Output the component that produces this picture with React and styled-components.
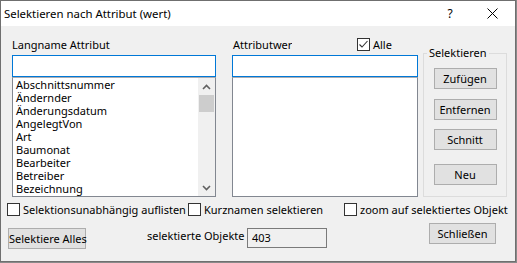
import React from "react";
import styled, { createGlobalStyle } from "styled-components";

const GlobalStyle = createGlobalStyle`
  html, body { margin: 0; padding: 0; background: #8a8a8a; }
  body { font-family: "Noto Sans", "Open Sans", sans-serif; font-size: 11px; color: #000; }
  * { box-sizing: border-box; }
`;

const Window = styled.div`
  width: 516px;
  height: 262px;
  border: 1px solid #6f6f6f;
  background: #f0f0f0;
  display: flex;
  flex-direction: column;
`;

const TitleBar = styled.div`
  height: 25px;
  background: #fff;
  display: flex;
  align-items: center;
  padding-left: 3px;
`;

const Title = styled.span`
  font-size: 11.4px;
  flex: 1;
`;

const TitleButton = styled.div`
  width: ${(p) => p.$w}px;
  height: 25px;
  display: flex;
  align-items: center;
  justify-content: center;
  font-size: 12px;
`;

const Body = styled.div`
  flex: 1;
  padding: 7px 0 0 6px;
  display: flex;
  flex-direction: column;
`;

const MainRow = styled.div`
  display: flex;
  align-items: flex-start;
  margin-left: 5px;
`;

const Column = styled.div`
  width: ${(p) => p.$w}px;
  margin-left: ${(p) => p.$ml || 0}px;
  display: flex;
  flex-direction: column;
`;

const HeaderRow = styled.div`
  height: 22px;
  display: flex;
  align-items: center;
`;

const Label = styled.span`
  white-space: nowrap;
  padding-left: ${(p) => p.$pl || 0}px;
`;

const ClippedLabel = styled.span`
  white-space: nowrap;
  overflow: hidden;
  width: 60px;
  padding-left: 1px;
`;

const SearchInput = styled.div`
  height: 22px;
  border: 1px solid #0078d7;
  background: #fff;
`;

const ListBox = styled.div`
  height: 120px;
  border: 1px solid #828790;
  border-top-color: #abadb3;
  background: #fff;
  display: flex;
`;

const Items = styled.div`
  flex: 1;
  padding: 0 0 0 3px;
  overflow: hidden;
`;

const Item = styled.div`
  height: 13px;
  line-height: 13px;
  white-space: nowrap;
`;

const ScrollBar = styled.div`
  width: 17px;
  background: #f0f0f0;
  display: flex;
  flex-direction: column;
`;

const ScrollArrow = styled.div`
  height: 17px;
  display: flex;
  align-items: center;
  justify-content: center;
`;

const Thumb = styled.div`
  height: 17px;
  margin: 0 1px;
  background: #cdcdcd;
`;

const Track = styled.div`
  flex: 1;
`;

const GroupBox = styled.fieldset`
  margin: 12px 0 0 5px;
  padding: 0;
  width: 84px;
  height: 152px;
  border: 1px solid #dcdcdc;
  display: flex;
  flex-direction: column;
  align-items: center;
`;

const Legend = styled.legend`
  margin-left: 3px;
  padding: 0 2px;
  font-size: 11px;
  line-height: 16px;
`;

const Button = styled.button`
  width: ${(p) => p.$w || 63}px;
  height: ${(p) => p.$h || 21}px;
  margin-top: ${(p) => p.$mt || 0}px;
  margin-left: ${(p) => p.$ml || 0}px;
  padding: 0;
  background: #e1e1e1;
  border: 1px solid #adadad;
  font-family: inherit;
  font-size: 11px;
  color: #000;
  white-space: nowrap;
  flex-shrink: 0;
`;

const CheckRow = styled.div`
  display: grid;
  grid-template-columns: 181px 156px auto;
  margin-top: 6px;
  height: 13px;
`;

const CheckItem = styled.label`
  display: flex;
  align-items: center;
  gap: 3px;
  height: 13px;
  white-space: nowrap;
  margin-left: ${(p) => p.$ml || 0}px;
`;

const Box = styled.span`
  width: 13px;
  height: 13px;
  border: 1px solid #333;
  background: #fff;
  display: flex;
  align-items: center;
  justify-content: center;
  flex-shrink: 0;
`;

const BottomRow = styled.div`
  display: flex;
  align-items: flex-start;
  margin-top: 7px;
  padding-left: 1px;
`;

const StatLabel = styled.span`
  margin-top: 5px;
  margin-left: 61px;
  width: 100px;
  line-height: 16px;
  white-space: nowrap;
`;

const ValueField = styled.div`
  width: 80px;
  height: 20px;
  margin-top: 5px;
  border: 1px solid #7a7a7a;
  background: #f0f0f0;
  padding-left: 4px;
  line-height: 18px;
`;

const Check = ({ checked }) => (
  <Box>
    {checked && (
      <svg width="11" height="11" viewBox="0 0 11 11">
        <polyline points="1.5,5.5 4,8 9.5,2" fill="none" stroke="#333" strokeWidth="1.1" />
      </svg>
    )}
  </Box>
);

const Chevron = ({ up }) => (
  <svg width="9" height="6" viewBox="0 0 9 6">
    <polyline
      points={up ? "1,5 4.5,1.5 8,5" : "1,1 4.5,4.5 8,1"}
      fill="none"
      stroke="#606060"
      strokeWidth="1.6"
    />
  </svg>
);

const items = [
  "Abschnittsnummer",
  "Ändernder",
  "Änderungsdatum",
  "AngelegtVon",
  "Art",
  "Baumonat",
  "Bearbeiter",
  "Betreiber",
  "Bezeichnung",
];

export default function App() {
  return (
    <>
      <GlobalStyle />
      <Window>
        <TitleBar>
          <Title>Selektieren nach Attribut (wert)</Title>
          <TitleButton $w={38}>?</TitleButton>
          <TitleButton $w={46}>
            <svg width="11" height="11" viewBox="0 0 11 11">
              <path d="M0.5 0.5 L10.5 10.5 M10.5 0.5 L0.5 10.5" stroke="#000" strokeWidth="1" />
            </svg>
          </TitleButton>
        </TitleBar>
        <Body>
          <MainRow>
            <Column $w={204}>
              <HeaderRow>
                <Label>Langname Attribut</Label>
              </HeaderRow>
              <SearchInput />
              <ListBox>
                <Items>
                  {items.map((t) => (
                    <Item key={t}>{t}</Item>
                  ))}
                </Items>
                <ScrollBar>
                  <ScrollArrow>
                    <Chevron up />
                  </ScrollArrow>
                  <Thumb />
                  <Track />
                  <ScrollArrow>
                    <Chevron />
                  </ScrollArrow>
                </ScrollBar>
              </ListBox>
            </Column>
            <Column $w={186} $ml={16}>
              <HeaderRow>
                <ClippedLabel>Attributwert</ClippedLabel>
                <CheckItem $ml={65}>
                  <Check checked />
                  Alle
                </CheckItem>
              </HeaderRow>
              <SearchInput />
              <ListBox />
            </Column>
            <GroupBox>
              <Legend>Selektieren</Legend>
              <Button $mt={7}>Zufügen</Button>
              <Button $mt={10}>Entfernen</Button>
              <Button $mt={9}>Schnitt</Button>
              <Button $mt={14}>Neu</Button>
            </GroupBox>
          </MainRow>
          <CheckRow>
            <CheckItem>
              <Check />
              Selektionsunabhängig auflisten
            </CheckItem>
            <CheckItem>
              <Check />
              Kurznamen selektieren
            </CheckItem>
            <CheckItem>
              <Check />
              zoom auf selektiertes Objekt
            </CheckItem>
          </CheckRow>
          <BottomRow>
            <Button $w={78} $h={21} $mt={5}>Selektiere Alles</Button>
            <StatLabel>selektierte Objekte</StatLabel>
            <ValueField>403</ValueField>
            <Button $w={67} $h={21} $ml={102}>Schließen</Button>
          </BottomRow>
        </Body>
      </Window>
    </>
  );
}
